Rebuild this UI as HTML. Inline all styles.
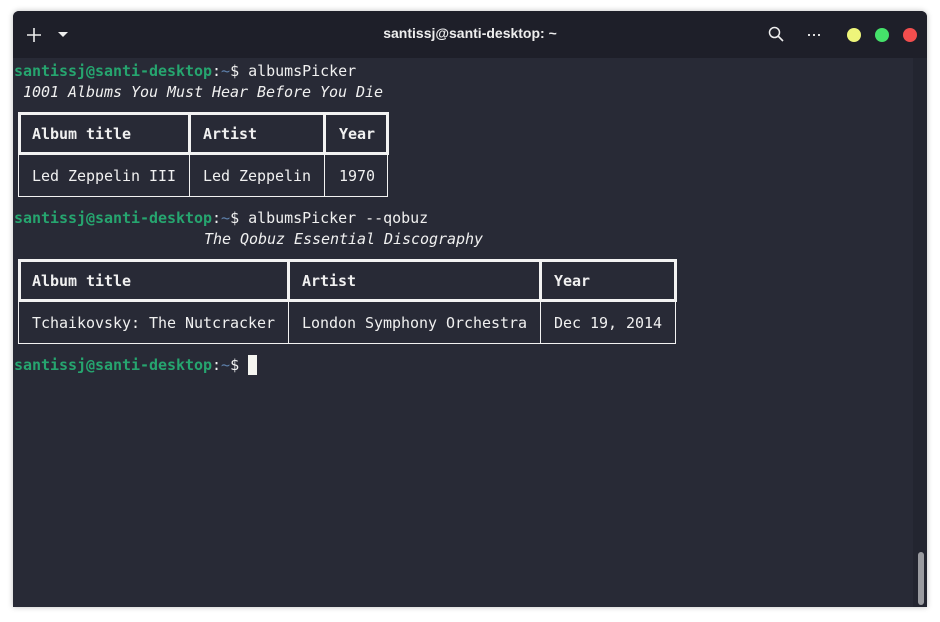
<!DOCTYPE html>
<html><head><style>
body{margin:0;width:940px;height:622px;background:#fff;position:relative;overflow:hidden;font-family:"DejaVu Sans Mono","Liberation Mono",monospace;}
.win{position:absolute;left:13px;top:11px;width:914px;height:596px;background:#282a36;border-radius:6px 6px 0 0;box-shadow:0 0 6px rgba(0,0,0,.25);overflow:hidden}
.tb{position:absolute;left:0;top:0;width:914px;height:47px;background:#1e1f29}
.t{position:absolute;left:0;font-size:15px;line-height:21px;color:#f0f0f0;white-space:pre;letter-spacing:-0.03px}
.g{color:#26a56f;font-weight:bold}.b{color:#5e81ac}
.i{font-style:italic}
.bx{position:absolute;box-sizing:border-box;border:solid #f2f2f2}
.h{font-weight:bold}
.dot{position:absolute;top:17px;width:14px;height:14px;border-radius:50%}
</style></head><body>
<div class="win">
<div class="tb">
<svg style="position:absolute;left:13px;top:16px" width="16" height="16"><path d="M8 1V15M1 8H15" stroke="#eee" stroke-width="1.6"/></svg>
<svg style="position:absolute;left:44px;top:20px" width="12" height="8"><path d="M1 1H11L6 6Z" fill="#eee"/></svg>
<div style="position:absolute;left:0;width:914px;top:14px;text-align:center;color:#eee;font:bold 14px 'Liberation Sans',sans-serif">santissj@santi-desktop: ~</div>
<svg style="position:absolute;left:755px;top:15px" width="16" height="17"><circle cx="6.5" cy="6.5" r="5" stroke="#eee" stroke-width="1.5" fill="none"/><path d="M10 10L15 15" stroke="#eee" stroke-width="1.6"/></svg>
<div style="position:absolute;left:795px;top:23px;width:14px;height:2px;background:repeating-linear-gradient(90deg,#ddd 0 2px,transparent 2px 5px)"></div>
<div class="dot" style="left:834px;background:#eef57a"></div>
<div class="dot" style="left:862px;background:#45e16a"></div>
<div class="dot" style="left:890px;background:#f24e4e"></div>
</div>
<div style="position:absolute;left:900px;top:47px;width:14px;height:549px;background:#232530"></div>
<div style="position:absolute;left:905px;top:541px;width:6px;height:53px;border-radius:3px;background:#9a9ba0"></div>
</div>
<div class="t" style="top:61px;left:14px"><span class="g">santissj@santi-desktop</span>:<span class="b">~</span>$ albumsPicker</div>
<div class="t i" style="top:82px;left:23px">1001 Albums You Must Hear Before You Die</div>
<div class="bx" style="left:18px;top:112px;width:371px;height:43px;border-width:3px"></div>
<div style="position:absolute;left:188px;top:112px;width:3px;height:43px;background:#f2f2f2"></div>
<div style="position:absolute;left:323px;top:112px;width:3px;height:43px;background:#f2f2f2"></div>
<div class="bx" style="left:18px;top:154px;width:370px;height:43px;border-width:0 1px 1px 1px"></div>
<div style="position:absolute;left:189px;top:154px;width:1px;height:42px;background:#f2f2f2"></div>
<div style="position:absolute;left:324px;top:154px;width:1px;height:42px;background:#f2f2f2"></div>
<div class="t h" style="top:124px;left:32px">Album title</div>
<div class="t h" style="top:124px;left:203px">Artist</div>
<div class="t h" style="top:124px;left:339px">Year</div>
<div class="t" style="top:166px;left:32px">Led Zeppelin III</div>
<div class="t" style="top:166px;left:203px">Led Zeppelin</div>
<div class="t" style="top:166px;left:339px">1970</div>
<div class="t" style="top:208px;left:14px"><span class="g">santissj@santi-desktop</span>:<span class="b">~</span>$ albumsPicker --qobuz</div>
<div class="t i" style="top:229px;left:204px">The Qobuz Essential Discography</div>
<div class="bx" style="left:18px;top:259px;width:659px;height:43px;border-width:3px"></div>
<div style="position:absolute;left:287px;top:259px;width:3px;height:43px;background:#f2f2f2"></div>
<div style="position:absolute;left:539px;top:259px;width:3px;height:43px;background:#f2f2f2"></div>
<div class="bx" style="left:18px;top:301px;width:658px;height:43px;border-width:0 1px 1px 1px"></div>
<div style="position:absolute;left:288px;top:301px;width:1px;height:42px;background:#f2f2f2"></div>
<div style="position:absolute;left:540px;top:301px;width:1px;height:42px;background:#f2f2f2"></div>
<div class="t h" style="top:271px;left:32px">Album title</div>
<div class="t h" style="top:271px;left:302px">Artist</div>
<div class="t h" style="top:271px;left:554px">Year</div>
<div class="t" style="top:313px;left:32px">Tchaikovsky: The Nutcracker</div>
<div class="t" style="top:313px;left:302px">London Symphony Orchestra</div>
<div class="t" style="top:313px;left:554px">Dec 19, 2014</div>
<div class="t" style="top:355px;left:14px"><span class="g">santissj@santi-desktop</span>:<span class="b">~</span>$ </div>
<div style="position:absolute;left:248px;top:355px;width:9px;height:20px;background:#f5f5f0"></div>
</body></html>
